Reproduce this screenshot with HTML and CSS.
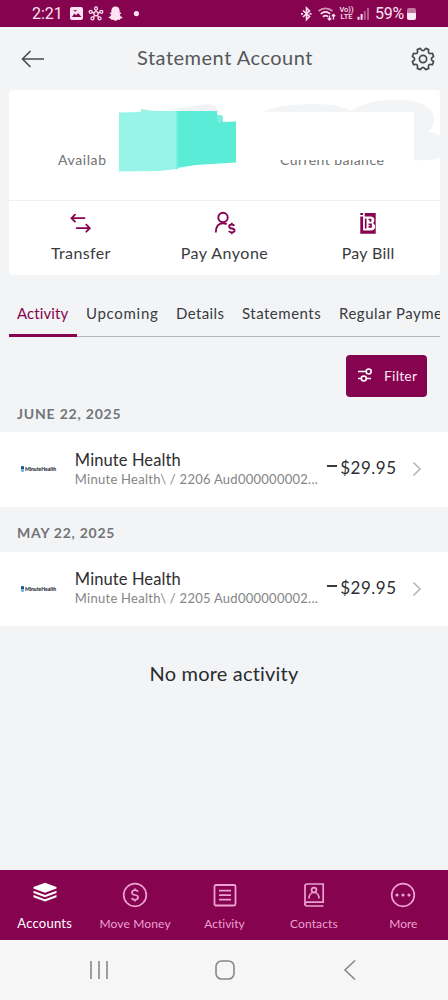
FILE: index.html
```
<!DOCTYPE html>
<html lang="en">
<head>
<meta charset="utf-8">
<title>Statement Account</title>
<link rel="stylesheet" href="styles.css">
</head>
<body>
<div class="phone">
  <div class="status">
    <span class="clock">2:21</span>
    <svg class="status-left" width="72" height="16" viewBox="0 0 72 16" fill="#fbe3f1">
      <path fill-rule="evenodd" d="M2 1h9a2 2 0 0 1 2 2v9a2 2 0 0 1-2 2H2a2 2 0 0 1-2-2V3a2 2 0 0 1 2-2zM2 11h9.500L8 7 6.200 9.200 4.300 7.500zM3 4.200l2.200 1.500 2-1.500z"/>
      <g fill="none" stroke="#fbe3f1" stroke-width="1.300"><circle cx="26" cy="7.800" r="2.100"/><circle cx="26" cy="2.400" r="1.500"/><circle cx="20.700" cy="5.800" r="1.500"/><circle cx="31.300" cy="5.800" r="1.500"/><circle cx="22.500" cy="12.400" r="1.500"/><circle cx="29.500" cy="12.400" r="1.500"/><path d="M26 4v1.700M22.200 6.300l1.800.800M29.800 6.300l-1.800.800M23.500 11.200l1.200-1.700M28.500 11.200l-1.200-1.700"/></g>
      <path d="M45.500.5c2.700 0 4.200 1.900 4.200 4.500v1.700l1.300-.2.200 1-1.500 1c.5 1.600 1.500 2.400 3 3-.5 1-1.500 1-2.400 1.200l-.5 1.100-2-.1-2.300 1.400-2.300-1.400-2 .1-.5-1.100c-.900-.200-1.900-.200-2.400-1.200 1.500-.6 2.500-1.400 3-3l-1.500-1 .2-1 1.300.2V5c0-2.600 1.500-4.500 4.200-4.500z"/>
      <circle cx="66.400" cy="7.600" r="2.600"/>
    </svg>
    <svg class="status-right" width="70" height="16" viewBox="0 0 70 16" fill="none" stroke="#fbe3f1">
      <path stroke-width="1.600" d="M3 4.500l6.500 6-3 3V2l3 3L3 11"/><path stroke-width="1.800" d="M1 7.800h2M9.500 7.800h2"/>
      <g stroke-width="1.600"><path opacity=".65" d="M18.500 5.200c4-3.800 10-3.800 14 0"/><path d="M20.700 8c3-2.700 6.500-2.700 9.500-.2M23 10.800c1.700-1.600 3.500-1.600 5 0"/></g>
      <path stroke-width="1.300" d="M29.500 9.500v4.500M27.700 12.300l1.800 1.800 1.800-1.800M33.500 13.500V8.500M31.800 10.200l1.700-1.700 1.700 1.700"/>
      <g fill="#fbe3f1" stroke="none"><rect x="57.500" y="10.800" width="2" height="3"/><rect x="60.600" y="8" width="2" height="5.800"/><g opacity=".4"><rect x="63.800" y="5" width="2" height="8.800"/><rect x="67" y="2" width="2" height="11.800"/></g></g>
    </svg>
    <span class="volte"><span>Vo))</span><span>LTE</span></span>
    <span class="percent">59%</span>
    <span class="battery"></span>
  </div>

  <header class="header">
    <svg class="back" width="24" height="18" viewBox="0 0 24 18" fill="none" stroke="#47494b" stroke-width="1.600"><path d="M23 9H2M9.500 1L1.500 9l8 8"/></svg>
    <h1 class="title"><span>Statement Account</span></h1>
    <svg class="gear" width="24" height="24" viewBox="-12 -12 24 24" fill="none" stroke="#47494b" stroke-width="1.700" stroke-linejoin="round"><circle r="3.600"/><path d="M-2.600-10.600 Q0-6 2.600-10.600 L5.700-9.400 Q4.300-4.300 9.400-5.700 L10.600-2.600 Q6 0 10.600 2.600 L9.400 5.700 Q4.300 4.300 5.700 9.400 L2.600 10.600 Q0 6-2.600 10.600 L-5.700 9.400 Q-4.300 4.300-9.400 5.700 L-10.600 2.600 Q-6 0-10.600-2.600 L-9.400-5.700 Q-4.300-4.300-5.700-9.400 Z"/></svg>
  </header>

  <section class="card">
    <div class="balances">
      <div class="balance available"><span>Availab</span></div>
      <div class="balance current"><span>Current balance</span></div>
      <svg class="cover" width="431" height="110" viewBox="9 90 431 110">
        <path fill="#f1f2f4" d="M165 110l40-5.500q10-2 15 8z"/>
        <path fill="#f3f4f6" d="M262 112c18-9 74-12 89-1 20-14 63-15 78-3 7 5 6 20-1 24q7 0 12 4v22q-10 3-28 2V112z"/>
        <path fill="#fff" d="M262 112h152v48H262z"/>
        <path fill="#fff" d="M104.500 151h4v15h-2z"/>
        <path fill="#98f4e9" d="M119 112.500l22-.5v-3l12 2h24v58l-18 2-40 .5z"/>
        <path fill="#5becd7" d="M177 111h40l1 11h4l14-.500v41l-40 2.500-19 3z"/>
        <path fill="#7aefdf" d="M176 111h2v58h-2zM217 115h4l2 2v5l-5 1z"/>
      </svg>
    </div>
    <div class="actions">
      <div class="action"><svg width="24" height="24" viewBox="0 0 24 24" fill="none" stroke="#86034f" stroke-width="1.800" stroke-linecap="round"><path d="M15.500 7.200H2.500M6 3.700L2.500 7.200 6 10.700M7.800 17.200h13M17.300 13.700l3.500 3.500-3.500 3.500"/></svg><span class="transfer">Transfer</span></div>
      <div class="action"><svg width="24" height="24" viewBox="0 0 24 24" fill="none" stroke="#86034f" stroke-width="1.900"><circle cx="10" cy="6.500" r="4.700"/><path d="M2.800 21.500c0-6.500 3-9.300 7.200-9.300 1.500 0 2.700.3 3.700 1"/><path stroke-width="1.800" d="M21.500 14.800c-.8-1-1.500-1.300-2.700-1.300-3.500 0-3.500 3.700 0 4 3.700.3 3.700 4 0 4-1.300 0-2.300-.4-3-1.400M18.800 11.800v1.700M18.800 21.500v1.800"/></svg><span class="anyone">Pay Anyone</span></div>
      <div class="action"><svg width="24" height="24" viewBox="0 0 24 24"><path fill="#86034f" d="M4.300 2h2.800v2H4.300zM8.700 2h11v20.700H4.300V5.500h2.800v14h8c5 0 5-5.800 2-7.300 2.400-2 1.500-6.700-2.300-6.700H8.700z"/><path fill="none" stroke="#86034f" stroke-width="1.700" d="M9.700 7.500v10M12.500 8.500h2v2.300M12.500 13.300h2.500v2.600h-2.500"/></svg><span class="bill">Pay Bill</span></div>
    </div>
  </section>

  <nav class="tabs">
    <span class="tab active t1"><span>Activity</span></span>
    <span class="tab t2"><span>Upcoming</span></span>
    <span class="tab t3"><span>Details</span></span>
    <span class="tab t4"><span>Statements</span></span>
    <span class="tab t5"><span>Regular Payments</span></span>
  </nav>

  <div class="toolbar">
    <button class="filter"><svg width="16" height="16" viewBox="0 0 16 16" fill="none" stroke="#fff" stroke-width="1.600"><path d="M1 4.500h8M1 11.500h3M9.500 11.500H14"/><circle cx="11.700" cy="4.500" r="2.500"/><circle cx="6.800" cy="11.500" r="2.500"/></svg><span>Filter</span></button>
  </div>

  <h2 class="date june"><span>JUNE 22, 2025</span></h2>
  <article class="row">
    <div class="merchant"><i class="pin"></i><span>MinuteHealth</span></div>
    <div class="info"><span class="name">Minute Health</span><span class="detail">Minute Health\ / 2206 Aud000000002...</span></div>
    <span class="amount"><i class="minus"></i><span>$29.95</span></span>
    <svg class="chevron" width="10" height="16" viewBox="0 0 10 16" fill="none" stroke="#b6b7b8" stroke-width="1.600"><path d="M1.500 1.500L8 8l-6.500 6.500"/></svg>
  </article>
  <h2 class="date may"><span>MAY 22, 2025</span></h2>
  <article class="row">
    <div class="merchant"><i class="pin"></i><span>MinuteHealth</span></div>
    <div class="info"><span class="name">Minute Health</span><span class="detail">Minute Health\ / 2205 Aud000000002...</span></div>
    <span class="amount"><i class="minus"></i><span>$29.95</span></span>
    <svg class="chevron" width="10" height="16" viewBox="0 0 10 16" fill="none" stroke="#b6b7b8" stroke-width="1.600"><path d="M1.500 1.500L8 8l-6.500 6.500"/></svg>
  </article>
  <p class="end"><span>No more activity</span></p>

  <nav class="bottom">
    <div class="item selected"><svg width="26" height="26" viewBox="0 0 26 26" fill="#fff"><path d="M13 .8L24.500 5v1.600L13 10.800 1.500 6.600V5z"/><path d="M1.500 8.800L13 13l11.500-4.200v2.300L13 15.300 1.500 11.100zM1.500 13L13 17.200 24.500 13v2.300L13 19.500 1.500 15.300z"/></svg><span class="n1">Accounts</span></div>
    <div class="item"><svg width="26" height="26" viewBox="0 0 26 26" fill="none" stroke="#eda1cf" stroke-width="1.700"><circle cx="13" cy="13" r="11.300"/><path d="M16 9.800c-.5-1.200-1.500-1.600-3-1.600-4.200 0-4 4.300 0 4.800 4.200.5 4 4.800 0 4.800-1.700 0-2.700-.6-3.300-1.800M13 6.500v1.700M13 17.800v1.800"/></svg><span class="n2">Move Money</span></div>
    <div class="item"><svg width="26" height="26" viewBox="0 0 26 26" fill="none" stroke="#eda1cf" stroke-width="1.800"><rect x="2.500" y="3" width="21" height="20.500" rx="1.500"/><path d="M7 8.700h12M7 13.200h12M7 17.700h12"/></svg><span class="n3">Activity</span></div>
    <div class="item"><svg width="26" height="26" viewBox="0 0 26 26" fill="none" stroke="#eda1cf" stroke-width="1.700"><path d="M22.500 24H6.200c-3.200 0-3.200-3.800 0-3.800h16V2H6.200C4.700 2 4 3 4 4v18"/><circle cx="13" cy="8" r="2.400"/><path d="M8 16.500c0-8 10-8 10 0"/></svg><span class="n4">Contacts</span></div>
    <div class="item"><svg width="26" height="26" viewBox="0 0 26 26" fill="#eda1cf"><circle cx="13" cy="13" r="11.300" fill="none" stroke="#eda1cf" stroke-width="1.700"/><circle cx="7" cy="13" r="1.600"/><circle cx="13" cy="13" r="1.600"/><circle cx="19" cy="13" r="1.600"/></svg><span class="n5">More</span></div>
  </nav>
  <div class="system">
    <svg width="20" height="20" viewBox="0 0 20 20" stroke="#888" stroke-width="1.600"><path d="M2 1v18M10 1v18M18 1v18"/></svg>
    <svg width="20" height="20" viewBox="0 0 20 20" fill="none" stroke="#888" stroke-width="1.600"><rect x="1" y="1" width="18" height="18" rx="5.500"/></svg>
    <svg width="20" height="20" viewBox="0 0 20 20" fill="none" stroke="#888" stroke-width="1.600"><path d="M15 .5L5 10l10 9.500"/></svg>
  </div>
</div>
</body>
</html>
```
FILE: styles.css
```
* { box-sizing: border-box; }
body { margin: 0; font-family: Lato, "Open Sans", sans-serif; font-variant-ligatures: none; color: #3a3b3e; background: #f2f4f6; }
h1, h2, p { margin: 0; font-weight: 400; }
svg { display: block; flex: none; }
span { white-space: nowrap; }
.phone { width: 448px; height: 1000px; display: flex; flex-direction: column; overflow: hidden; background: #f2f4f6; }
.phone > * { flex: none; }

.status { height: 27px; background: #86034f; color: #fbe3f1; display: flex; align-items: center; font-family: Roboto, sans-serif; font-size: 16px; padding-left: 32px; }
.clock { width: 38px; line-height: 27px; }
.status-left { margin-right: 158px; }
.status-right { width: 70px; }
.volte { width: 15px; margin-left: -31px; margin-right: 20px; display: flex; flex-direction: column; align-items: center; font-size: 7.500px; line-height: 6.500px; font-weight: 500; }
.percent { width: 32px; letter-spacing: -.3px; padding-left: 1px; }
.battery { width: 9px; height: 12px; margin-left: 1px; border-radius: 2px; background: linear-gradient(#bf79a2 0 42%, #fbe9f4 42%); }

.header { height: 63px; display: flex; align-items: center; padding: 0 13px 0 21px; color: #55575a; }
.title { flex: 1; text-align: center; font-size: 20px; letter-spacing: .5px; line-height: 24px; padding: 0 6px 3px 0; }

.card { margin: 0 8px 0 9px; height: 185px; border-radius: 4px; background: #fff; overflow: hidden; }
.balances { position: relative; height: 111px; border-bottom: 1px solid #eff0f1; display: flex; align-items: flex-start; padding: 61px 0 0 49px; font-size: 14px; line-height: 18px; color: #707173; }
.balance { letter-spacing: .45px; }
.available { width: 222px; letter-spacing: .6px; }
.cover { position: absolute; left: 0; top: 0; }
.actions { display: flex; height: 74px; padding-top: 10px; }
.action { flex: 1; display: flex; flex-direction: column; align-items: center; gap: 7px; font-size: 16px; line-height: 22px; }
.transfer { letter-spacing: .35px; }
.anyone { letter-spacing: .5px; }
.bill { letter-spacing: .3px; }

.tabs { margin: 14px 8px 0 9px; height: 48px; display: flex; overflow: hidden; font-size: 15px; line-height: 48px; background: linear-gradient(#b4b6b9, #b4b6b9) 0 47px / 100% 1px no-repeat; }
.tab { flex: none; padding-left: 9px; height: 48px; }
.t1 { width: 68px; padding-left: 8px; letter-spacing: .1px; }
.t2 { width: 90px; letter-spacing: .7px; }
.t3 { width: 66px; letter-spacing: .4px; }
.t4 { width: 97px; letter-spacing: .5px; }
.t5 { letter-spacing: .5px; }
.active { color: #86034f; border-bottom: 3px solid #86034f; }

.toolbar { height: 60px; padding: 18px 21px 0 0; display: flex; justify-content: flex-end; }
.filter { width: 81px; height: 42px; border: 0; border-radius: 4px; padding: 0 0 2px 11px; background: #86034f; color: #fbe3f1; font: 14px Lato, sans-serif; letter-spacing: .2px; display: flex; align-items: center; gap: 11px; }

.date { padding-left: 17px; font-size: 14px; font-weight: 700; letter-spacing: .8px; color: #727477; line-height: 20px; }
.june { height: 35px; padding-top: 7px; }
.may { height: 45px; padding-top: 16px; letter-spacing: .75px; }
.row { height: 74.500px; background: #fff; display: flex; align-items: center; padding: 0 26px 0 21px; }
.merchant { width: 54px; display: flex; align-items: center; gap: 1px; font: 900 5px Lato, sans-serif; color: #1d2530; }
.pin { width: 3px; height: 6px; border-radius: 1px; background: linear-gradient(#19598b 50%, #6fb6e7 50%); }
.info { width: 252px; display: flex; flex-direction: column; }
.name { font-size: 16.500px; letter-spacing: .1px; line-height: 19px; color: #2d2e31; }
.detail { font-size: 13px; letter-spacing: .26px; line-height: 18px; color: #838588; }
.amount { width: 86px; display: flex; align-items: center; gap: 3px; font-size: 17px; letter-spacing: .5px; color: #2d2e31; padding-bottom: 3px; }
.minus { width: 10px; height: 2px; background: #3a3b3e; margin: -3px 0 0 1px; }
.end { padding-top: 35px; font-size: 20px; letter-spacing: .2px; line-height: 24px; text-align: center; color: #2b2c2e; }

.bottom { margin-top: auto; height: 70px; background: #86034f; color: #eda1cf; display: flex; font-size: 12px; }
.item { flex: 1; display: flex; flex-direction: column; align-items: center; padding-top: 12px; gap: 8px; line-height: 16px; }
.n2, .n4 { letter-spacing: .15px; }
.selected { color: #fff; font-size: 13px; gap: 7px; letter-spacing: .25px; padding-right: 1px; }
.system { height: 60px; background: #f6f6f6; display: flex; align-items: center; justify-content: space-between; padding: 0 88px 0 89px; }
```
